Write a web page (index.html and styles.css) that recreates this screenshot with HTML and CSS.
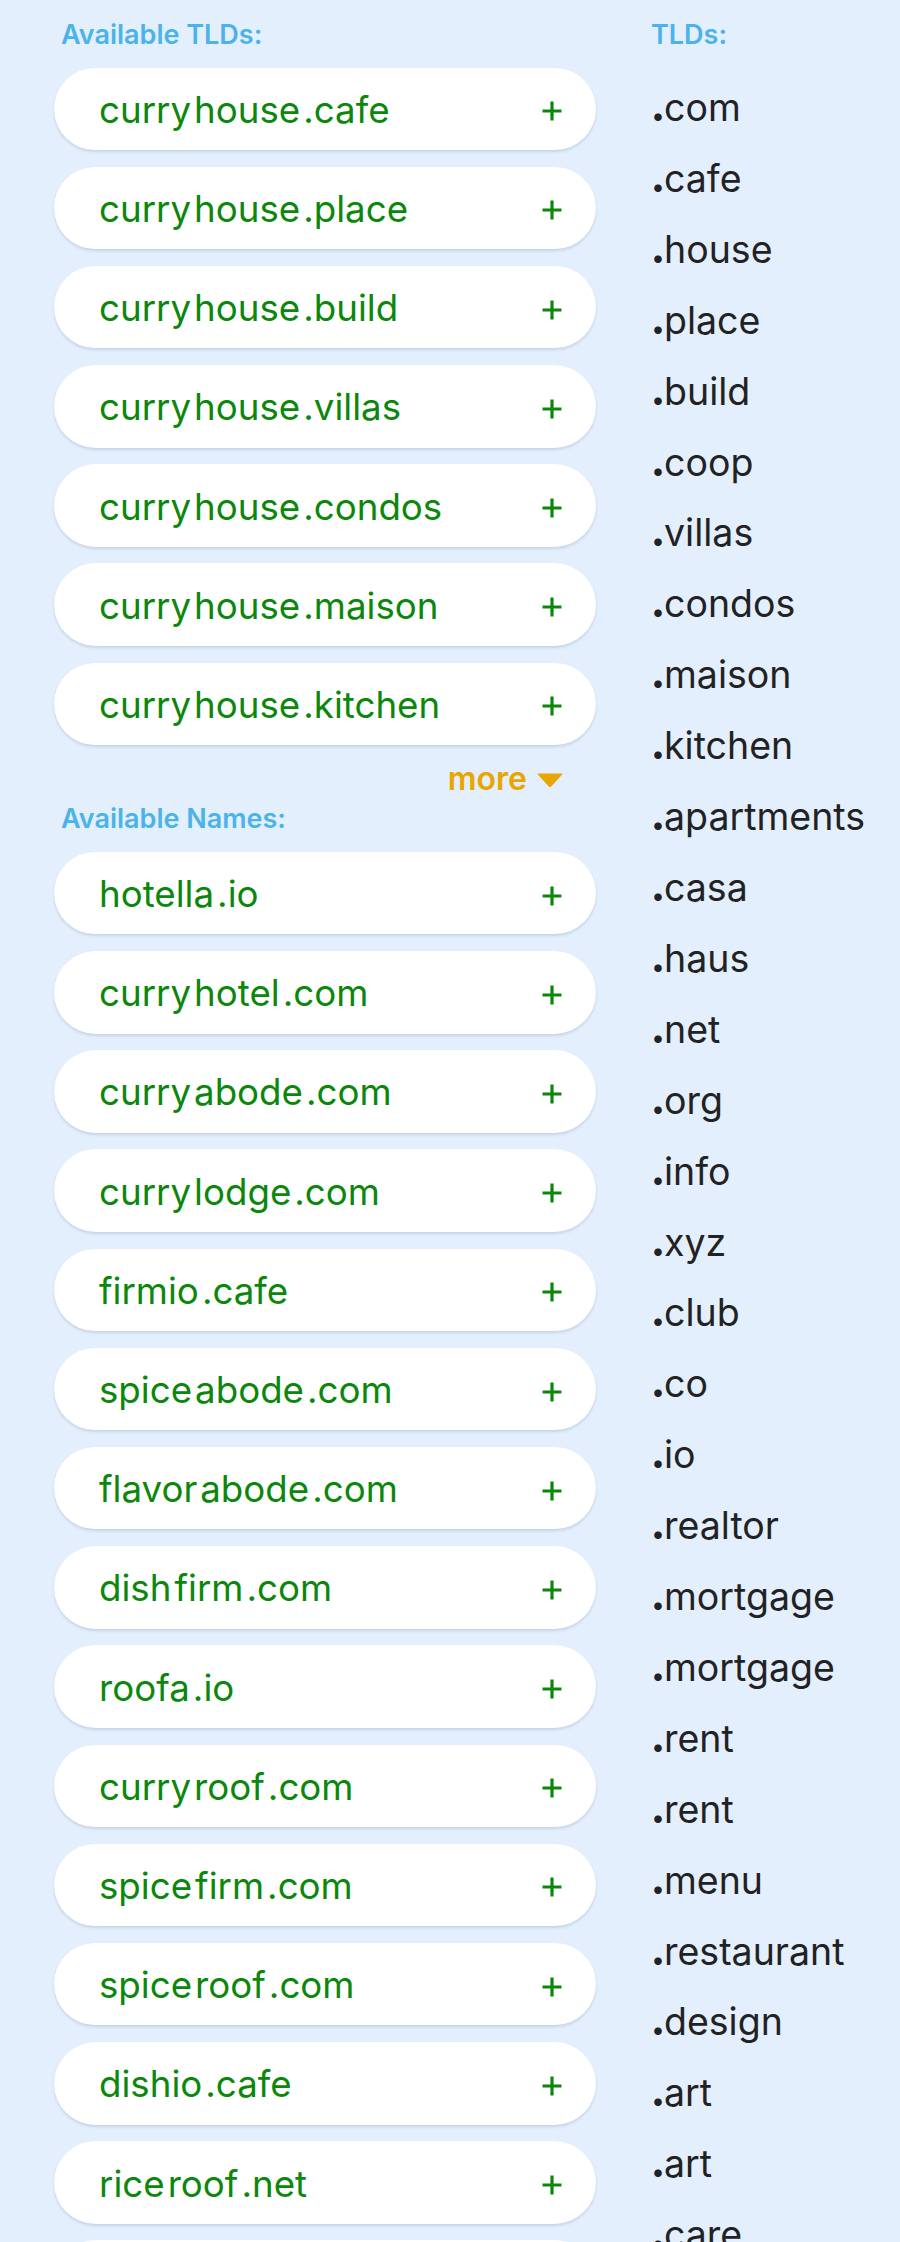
FILE: index.html
```html
<!DOCTYPE html>
<html>
<head>
<meta charset="utf-8">
<link rel="stylesheet" href="styles.css">
</head>
<body>
<div class="page">
  <div class="left">
    <div class="heading">Available TLDs:</div>
    <div class="cards">
      <div class="card"><div class="name"><span class="seg">curry</span><span class="seg">house</span><span class="seg">.cafe</span></div><svg class="plus" viewBox="0 0 20 20"><path d="M10 0.5V19.5M0.5 10H19.5"/></svg></div>
      <div class="card"><div class="name"><span class="seg">curry</span><span class="seg">house</span><span class="seg">.place</span></div><svg class="plus" viewBox="0 0 20 20"><path d="M10 0.5V19.5M0.5 10H19.5"/></svg></div>
      <div class="card"><div class="name"><span class="seg">curry</span><span class="seg">house</span><span class="seg">.build</span></div><svg class="plus" viewBox="0 0 20 20"><path d="M10 0.5V19.5M0.5 10H19.5"/></svg></div>
      <div class="card"><div class="name"><span class="seg">curry</span><span class="seg">house</span><span class="seg">.villas</span></div><svg class="plus" viewBox="0 0 20 20"><path d="M10 0.5V19.5M0.5 10H19.5"/></svg></div>
      <div class="card"><div class="name"><span class="seg">curry</span><span class="seg">house</span><span class="seg">.condos</span></div><svg class="plus" viewBox="0 0 20 20"><path d="M10 0.5V19.5M0.5 10H19.5"/></svg></div>
      <div class="card"><div class="name"><span class="seg">curry</span><span class="seg">house</span><span class="seg">.maison</span></div><svg class="plus" viewBox="0 0 20 20"><path d="M10 0.5V19.5M0.5 10H19.5"/></svg></div>
      <div class="card"><div class="name"><span class="seg">curry</span><span class="seg">house</span><span class="seg">.kitchen</span></div><svg class="plus" viewBox="0 0 20 20"><path d="M10 0.5V19.5M0.5 10H19.5"/></svg></div>
    </div>
    <div class="more"><span>more</span><svg class="tri" viewBox="0 0 28 16"><path d="M2.5 1.5H25.5Q27 1.5 26 2.8L15.2 14.6Q14 15.8 12.8 14.6L2 2.8Q1 1.5 2.5 1.5Z"/></svg></div>
    <div class="heading heading2">Available Names:</div>
    <div class="cards">
      <div class="card"><div class="name"><span class="seg">hotella</span><span class="seg">.io</span></div><svg class="plus" viewBox="0 0 20 20"><path d="M10 0.5V19.5M0.5 10H19.5"/></svg></div>
      <div class="card"><div class="name"><span class="seg">curry</span><span class="seg">hotel</span><span class="seg">.com</span></div><svg class="plus" viewBox="0 0 20 20"><path d="M10 0.5V19.5M0.5 10H19.5"/></svg></div>
      <div class="card"><div class="name"><span class="seg">curry</span><span class="seg">abode</span><span class="seg">.com</span></div><svg class="plus" viewBox="0 0 20 20"><path d="M10 0.5V19.5M0.5 10H19.5"/></svg></div>
      <div class="card"><div class="name"><span class="seg">curry</span><span class="seg">lodge</span><span class="seg">.com</span></div><svg class="plus" viewBox="0 0 20 20"><path d="M10 0.5V19.5M0.5 10H19.5"/></svg></div>
      <div class="card"><div class="name"><span class="seg">firmio</span><span class="seg">.cafe</span></div><svg class="plus" viewBox="0 0 20 20"><path d="M10 0.5V19.5M0.5 10H19.5"/></svg></div>
      <div class="card"><div class="name"><span class="seg">spice</span><span class="seg">abode</span><span class="seg">.com</span></div><svg class="plus" viewBox="0 0 20 20"><path d="M10 0.5V19.5M0.5 10H19.5"/></svg></div>
      <div class="card"><div class="name"><span class="seg">flavor</span><span class="seg">abode</span><span class="seg">.com</span></div><svg class="plus" viewBox="0 0 20 20"><path d="M10 0.5V19.5M0.5 10H19.5"/></svg></div>
      <div class="card"><div class="name"><span class="seg">dish</span><span class="seg">firm</span><span class="seg">.com</span></div><svg class="plus" viewBox="0 0 20 20"><path d="M10 0.5V19.5M0.5 10H19.5"/></svg></div>
      <div class="card"><div class="name"><span class="seg">roofa</span><span class="seg">.io</span></div><svg class="plus" viewBox="0 0 20 20"><path d="M10 0.5V19.5M0.5 10H19.5"/></svg></div>
      <div class="card"><div class="name"><span class="seg">curry</span><span class="seg">roof</span><span class="seg">.com</span></div><svg class="plus" viewBox="0 0 20 20"><path d="M10 0.5V19.5M0.5 10H19.5"/></svg></div>
      <div class="card"><div class="name"><span class="seg">spice</span><span class="seg">firm</span><span class="seg">.com</span></div><svg class="plus" viewBox="0 0 20 20"><path d="M10 0.5V19.5M0.5 10H19.5"/></svg></div>
      <div class="card"><div class="name"><span class="seg">spice</span><span class="seg">roof</span><span class="seg">.com</span></div><svg class="plus" viewBox="0 0 20 20"><path d="M10 0.5V19.5M0.5 10H19.5"/></svg></div>
      <div class="card"><div class="name"><span class="seg">dishio</span><span class="seg">.cafe</span></div><svg class="plus" viewBox="0 0 20 20"><path d="M10 0.5V19.5M0.5 10H19.5"/></svg></div>
      <div class="card"><div class="name"><span class="seg">rice</span><span class="seg">roof</span><span class="seg">.net</span></div><svg class="plus" viewBox="0 0 20 20"><path d="M10 0.5V19.5M0.5 10H19.5"/></svg></div>
      <div class="card"></div>
    </div>
  </div>
  <div class="right">
    <div class="heading">TLDs:</div>
    <div class="tlds">
      <div class="tld"><span class="dot">.</span>com</div>
      <div class="tld"><span class="dot">.</span>cafe</div>
      <div class="tld"><span class="dot">.</span>house</div>
      <div class="tld"><span class="dot">.</span>place</div>
      <div class="tld"><span class="dot">.</span>build</div>
      <div class="tld"><span class="dot">.</span>coop</div>
      <div class="tld"><span class="dot">.</span>villas</div>
      <div class="tld"><span class="dot">.</span>condos</div>
      <div class="tld"><span class="dot">.</span>maison</div>
      <div class="tld"><span class="dot">.</span>kitchen</div>
      <div class="tld"><span class="dot">.</span>apartments</div>
      <div class="tld"><span class="dot">.</span>casa</div>
      <div class="tld"><span class="dot">.</span>haus</div>
      <div class="tld"><span class="dot">.</span>net</div>
      <div class="tld"><span class="dot">.</span>org</div>
      <div class="tld"><span class="dot">.</span>info</div>
      <div class="tld"><span class="dot">.</span>xyz</div>
      <div class="tld"><span class="dot">.</span>club</div>
      <div class="tld"><span class="dot">.</span>co</div>
      <div class="tld"><span class="dot">.</span>io</div>
      <div class="tld"><span class="dot">.</span>realtor</div>
      <div class="tld"><span class="dot">.</span>mortgage</div>
      <div class="tld"><span class="dot">.</span>mortgage</div>
      <div class="tld"><span class="dot">.</span>rent</div>
      <div class="tld"><span class="dot">.</span>rent</div>
      <div class="tld"><span class="dot">.</span>menu</div>
      <div class="tld"><span class="dot">.</span>restaurant</div>
      <div class="tld"><span class="dot">.</span>design</div>
      <div class="tld"><span class="dot">.</span>art</div>
      <div class="tld"><span class="dot">.</span>art</div>
      <div class="tld"><span class="dot">.</span>care</div>
    </div>
  </div>
</div>
</body>
</html>
```

FILE: styles.css
```css
html, body {
  margin: 0;
  padding: 0;
  background: #e4effe;
}
body {
  font-family: Inter, "Noto Sans", sans-serif;
  height: 2242px;
  overflow: hidden;
}
.page {
  display: flex;
  align-items: flex-start;
  padding: 18.5px 0 0 54px;
}
.left {
  width: 542px;
  flex: none;
  display: flex;
  flex-direction: column;
}
.right {
  margin-left: 55px;
  display: flex;
  flex-direction: column;
}
.heading {
  font-size: 27px;
  font-weight: 600;
  color: #4ab3ec;
  line-height: 32px;
  padding-left: 7px;
}
.right .heading {
  padding-left: 0;
}
.cards {
  display: flex;
  flex-direction: column;
  gap: 16.7px;
  margin-top: 17px;
}
.card {
  height: 82.5px;
  flex: none;
  border-radius: 42px;
  background: #ffffff;
  box-shadow: 0 2px 3px rgba(60, 90, 130, 0.18);
  display: flex;
  align-items: center;
  justify-content: space-between;
  padding: 0 34px 0 45px;
  box-sizing: border-box;
}
.name {
  display: flex;
  font-size: 36.7px;
  color: #0b870b;
  line-height: 46px;
  padding-top: 2px;
}
.seg {
  margin-right: 3px;
}
.plus {
  width: 20px;
  height: 20px;
  margin-top: 5px;
}
.plus path {
  stroke: #0b870b;
  stroke-width: 3.2;
  fill: none;
}
.more {
  display: flex;
  justify-content: flex-end;
  align-items: center;
  gap: 9px;
  margin-top: 15px;
  padding-right: 32px;
  font-size: 32px;
  font-weight: 600;
  color: #e8a600;
  line-height: 38.7px;
}
.tri {
  width: 28px;
  height: 16px;
  margin-top: 2px;
}
.tri path {
  fill: #e8a600;
}
.heading2 {
  margin-top: 4px;
}
.tlds {
  margin-top: 22.5px;
  display: flex;
  flex-direction: column;
}
.tld {
  font-size: 37.5px;
  line-height: 70.9px;
  color: #222222;
  white-space: nowrap;
}
.dot {
  font-weight: 900;
  margin-right: -1px;
}
```
